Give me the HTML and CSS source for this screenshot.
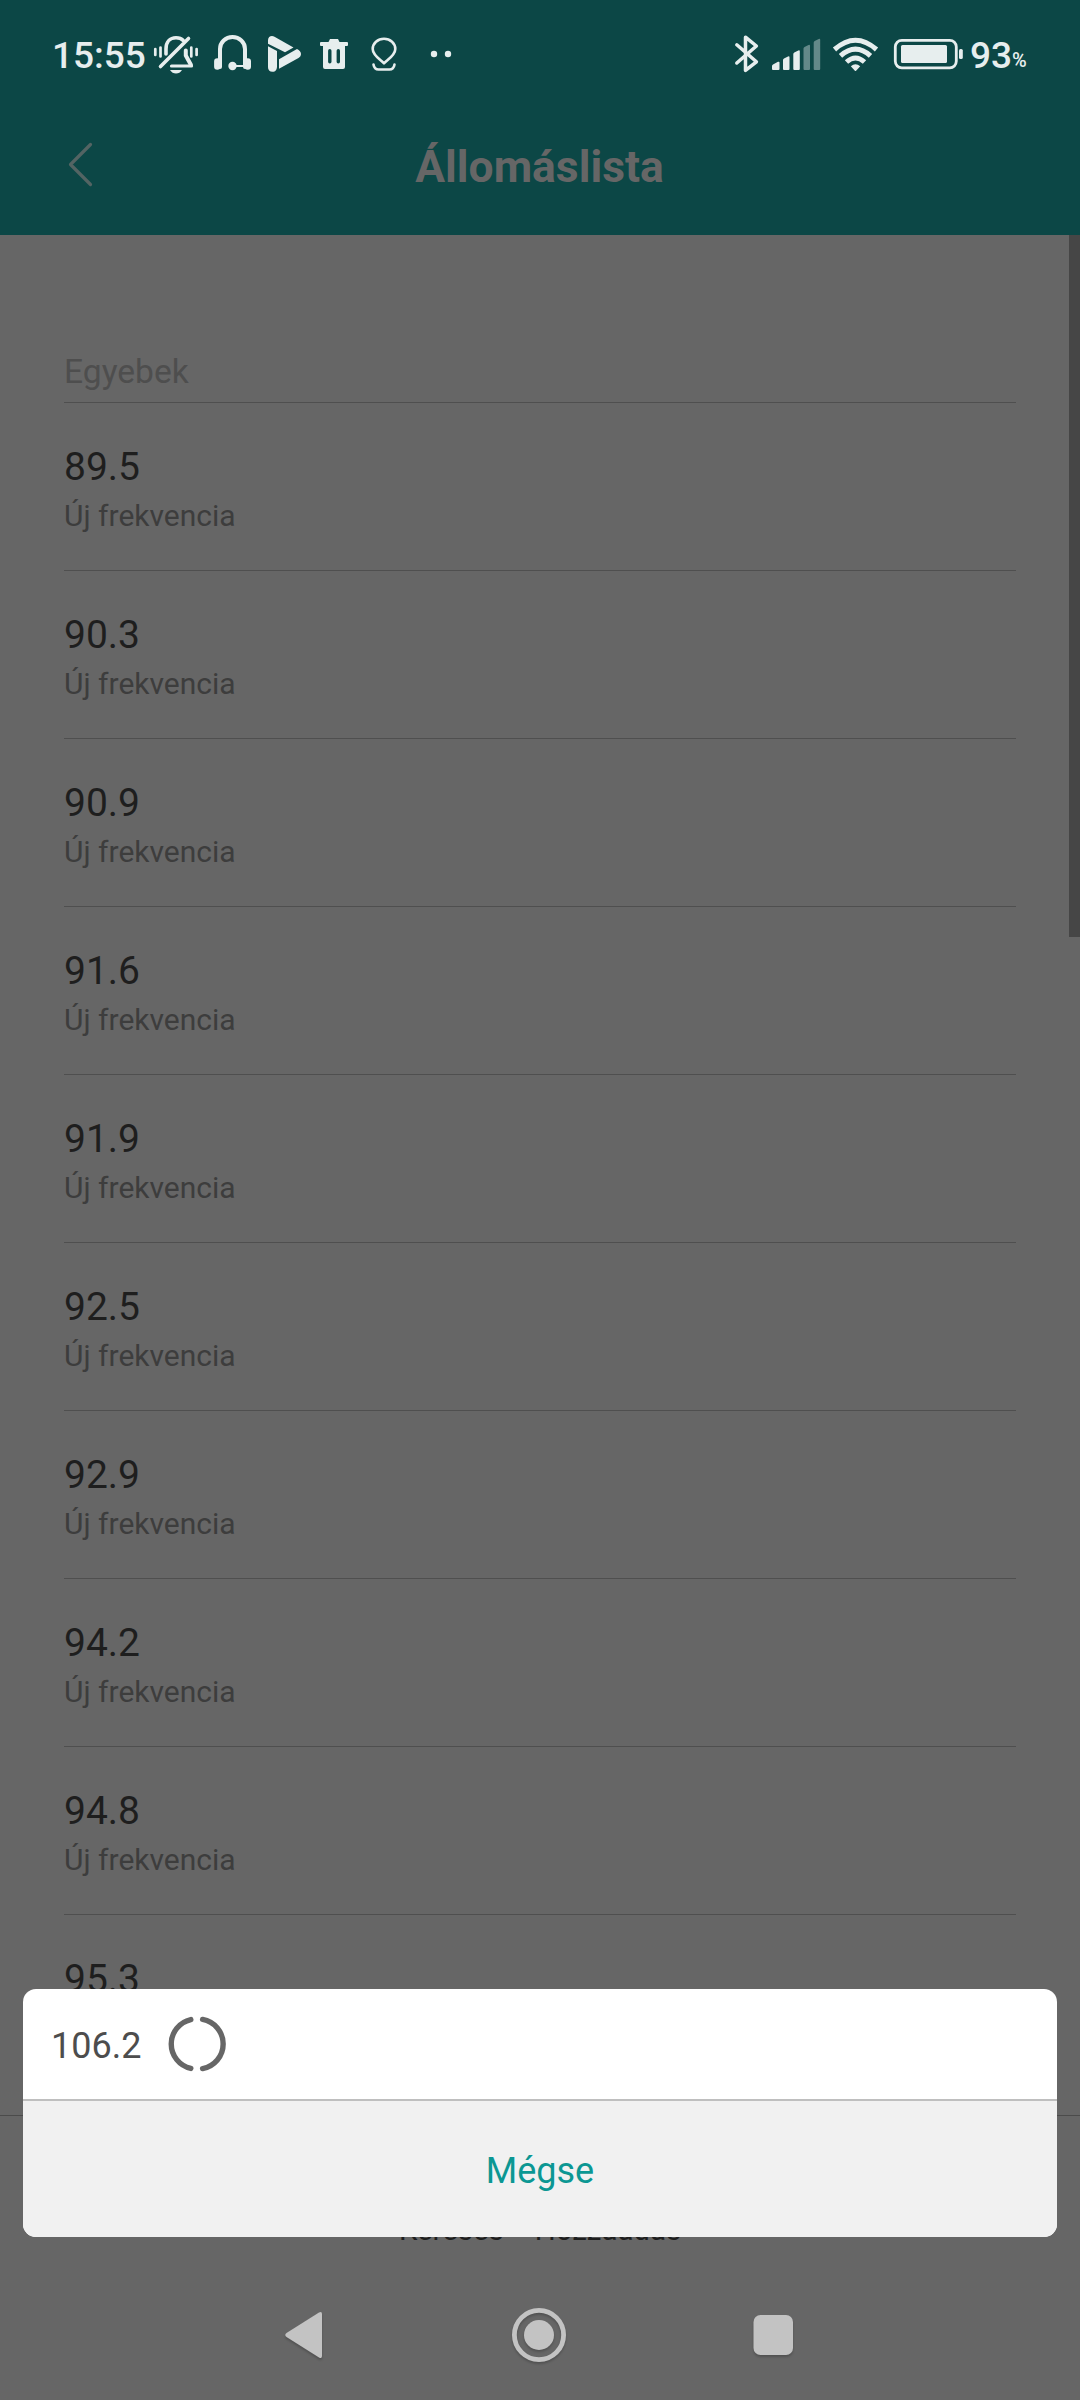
FILE: index.html
```html
<!DOCTYPE html>
<html lang="hu">
<head>
<meta charset="utf-8">
<title>Állomáslista</title>
<link rel="stylesheet" href="styles.css">
</head>
<body>
<div class="screen">
  <header class="top">
    <div class="status">
      <div class="status-group">
        <span class="clock">15:55</span>
        <svg width="56" height="50" viewBox="150 30 56 50" fill="none" stroke="currentColor" stroke-width="3.600" stroke-linecap="round" stroke-linejoin="round">
          <path d="M166 54v-5c0-7 4-11.200 10-11.200 3 0 5.500.8 7 2.500M160.500 66.500L188.500 38.500"/>
          <path d="M185.800 50.500v5l5.200 9.500" stroke-width="4"/>
          <path d="M171.500 66h20" stroke-width="3.200"/>
          <path d="M170 70h12c-1.500 2.500-3.500 3.500-6 3.500s-4.500-1-6-3.500z" fill="currentColor" stroke="none"/>
          <path d="M155.300 49v6M160.500 47.500v9M191.300 47.500v9M196.600 49v6" stroke-width="2.700"/>
        </svg>
        <svg width="54" height="50" viewBox="206 30 54 50" fill="none" stroke="currentColor" stroke-width="4" stroke-linecap="round">
          <path d="M220 67V49a12.500 12 0 0 1 25 0v18"/>
          <path d="M217.300 61.500v5M247.800 61.500v5" stroke-width="6.400"/>
          <path d="M232 66h14" stroke-width="2"/>
          <circle cx="232.500" cy="66" r="4.200" fill="currentColor" stroke="none"/>
        </svg>
        <svg width="50" height="50" viewBox="260 30 50 50" fill="currentColor">
          <path d="M268 46.200l9 4.800v15.500c0 3-1.500 5.300-4.500 5.300s-4.500-2-4.500-4.500z"/>
          <path d="M268 43.800v-3.600c0-3.500 3.500-5.200 6.500-3.400l19 10.800-8.500 4.700z"/>
          <path d="M279 68.800V59.200l18-10.200c2.500 1.200 4 3 4 5s-1.200 3.300-2.500 4z"/>
        </svg>
        <svg width="50" height="50" viewBox="310 30 50 50" fill="currentColor">
          <path fill-rule="evenodd" d="M330 39h8l1.500 3h7.500q1 0 1 1v2q0 1-1 1h-2v21q0 2-2 2h-18q-2 0-2-2V46h-2q-1 0-1-1v-2q0-1 1-1h7.500zM329.800 49q-1.700 0-1.700 1.700v11q0 1.700 1.700 1.700t1.700-1.700v-11q0-1.700-1.700-1.700zM338.300 49q-1.700 0-1.700 1.700v11q0 1.700 1.700 1.700t1.700-1.700v-11q0-1.700-1.700-1.700z"/>
        </svg>
        <svg width="52" height="50" viewBox="360 30 52 50" fill="none" stroke="currentColor" stroke-width="2.600" stroke-linecap="round" stroke-linejoin="round">
          <path d="M384 63.300c-4-4-11.300-8-11.300-14.300a11.300 10.200 0 0 1 22.600 0c0 6.300-7.300 10.300-11.300 14.300zM373.500 64.500c.5 3 2.500 5 5 5h11c2.500 0 4.500-2 5-5"/>
        </svg>
        <svg width="48" height="50" viewBox="412 30 48 50" fill="currentColor">
          <circle cx="434" cy="54" r="3.200"/><circle cx="448" cy="54" r="3.200"/>
        </svg>
      </div>
      <div class="status-group">
        <svg width="35" height="50" viewBox="730 30 35 50" fill="none" stroke="currentColor" stroke-width="3.500" stroke-linecap="round" stroke-linejoin="round">
          <path d="M736.800 44.800l19.600 17-10.900 8.600V37.200l10.900 8.800-19.600 17"/>
        </svg>
        <svg width="63" height="50" viewBox="765 30 63 50" fill="currentColor">
          <path d="M772 69v-3q0-1 1-1.500l5-2.700q1.500-.5 1.500.7V69q0 1-1 1h-5.500q-1 0-1-1zM783 69v-9q0-1 1-1.500l4-2q1.500-.5 1.500.7V69q0 1-1 1h-4.500q-1 0-1-1zM793.300 69V54q0-1 1-1.500l4-2q1.500-.5 1.500.7V69q0 1-1 1h-4.500q-1 0-1-1z"/>
          <path class="weak" d="M803.500 69V48.500q0-1 1-1.500l4-2q1.500-.5 1.500.7V69q0 1-1 1h-4.500q-1 0-1-1zM813.700 69V42.500q0-1 1-1.500l4-2q1.500-.5 1.500.7V69q0 1-1 1h-4.500q-1 0-1-1z"/>
        </svg>
        <svg width="57" height="50" viewBox="828 30 57 50" fill="none" stroke="currentColor" stroke-width="5">
          <path d="M834.500 49.500q21-18.500 42 0M840.500 55.800q15-13.500 30 0M846.500 62q9-8 18 0"/>
          <path d="M850.800 66.300q4.700-4.300 9.400 0l-4.100 4.400q-.6.600-1.200 0z" fill="currentColor" stroke="none"/>
        </svg>
        <svg width="85" height="50" viewBox="885 30 85 50">
          <rect x="895.300" y="40.300" width="61" height="27.500" rx="6.500" fill="none" stroke="currentColor" stroke-width="2.800"/>
          <rect x="901" y="45" width="46" height="18" rx="1.500" fill="currentColor"/>
          <rect x="959" y="49" width="3.800" height="10" rx="1.500" fill="currentColor"/>
        </svg>
        <span class="level">93<small>%</small></span>
      </div>
    </div>
    <div class="titlebar">
      <svg class="back" width="30" height="50" viewBox="66 140 30 50" fill="none" stroke="currentColor" stroke-width="3.200" stroke-linecap="round" stroke-linejoin="round"><path d="M90.500 144.500L70.500 164.500 90.500 184.500"/></svg>
      <h1>Állomáslista</h1>
    </div>
  </header>

  <main class="stations">
    <h2>Egyebek</h2>
    <ul>
      <li><b>89.5</b><span>Új frekvencia</span></li>
      <li><b>90.3</b><span>Új frekvencia</span></li>
      <li><b>90.9</b><span>Új frekvencia</span></li>
      <li><b>91.6</b><span>Új frekvencia</span></li>
      <li><b>91.9</b><span>Új frekvencia</span></li>
      <li><b>92.5</b><span>Új frekvencia</span></li>
      <li><b>92.9</b><span>Új frekvencia</span></li>
      <li><b>94.2</b><span>Új frekvencia</span></li>
      <li><b>94.8</b><span>Új frekvencia</span></li>
      <li><b>95.3</b></li>
    </ul>
    <div class="scrollbar"></div>
  </main>

  <footer class="actions"><span>Keresés</span><span>Hozzáadás</span></footer>

  <nav class="navbar">
    <svg width="540" height="80" viewBox="270 2295 540 80" fill="currentColor">
      <path d="M319 2312.500q3-1.500 3 1.500v42q0 3-3 1.500l-32.500-20.500q-2.500-2 0-4z"/>
      <circle cx="539" cy="2335" r="24.600" fill="none" stroke="currentColor" stroke-width="4.800"/>
      <circle cx="539" cy="2335" r="15"/>
      <rect x="753.500" y="2315" width="39.500" height="40" rx="7"/>
    </svg>
  </nav>

  <section class="dialog">
    <div class="progress">
      <span>106.2</span>
      <svg width="58" height="58" viewBox="-29 -29 58 58" fill="none" stroke="currentColor" stroke-width="5.400" stroke-linecap="round"><path d="M-6.200-24.400A25 25 0 0 0-6.200 24.400M5.600-24.600A25 25 0 0 1 5.600 24.600"/></svg>
    </div>
    <button class="cancel">Mégse</button>
  </section>
</div>
</body>
</html>
```
FILE: styles.css
```css
* { box-sizing: border-box; }
body { margin: 0; background: #666; font-family: Roboto, sans-serif; }
svg { display: block; flex: none; }
h1, h2, ul { margin: 0; padding: 0; }

.screen {
  position: relative;
  display: flex;
  flex-direction: column;
  width: 1080px;
  height: 2400px;
  overflow: hidden;
  background: #666;
}

.top { flex: none; height: 235px; background: #0c4746; }
.status {
  display: flex;
  justify-content: space-between;
  height: 110px;
  padding: 30px 50px 0 52px;
  color: #e7eeee;
}
.status-group { display: flex; height: 50px; line-height: 52px; }
.clock { width: 98px; font-size: 37px; font-weight: 500; white-space: nowrap; }
.level { width: 60px; font-size: 37px; font-weight: 500; white-space: nowrap; }
.level small { position: relative; top: -1px; font-size: 20px; }
.weak { opacity: .4; }

.titlebar { display: flex; align-items: center; height: 110px; padding: 0 66px; color: #666; }
.back { color: #536463; }
h1 { flex: 1; padding: 4px 31px 0 0; text-align: center; font-size: 44.4px; line-height: 52px; font-weight: 700; }

.stations { position: relative; flex: none; height: 1880px; padding: 0 64px; overflow: hidden; }
h2 {
  height: 168px;
  padding-top: 117px;
  border-bottom: 1px solid #4f4f4f;
  color: #4e4e4e;
  font-size: 33.6px;
  line-height: 40px;
  font-weight: 400;
}
ul { list-style: none; }
li { display: flex; flex-direction: column; height: 168px; padding-top: 40px; border-bottom: 1px solid #4f4f4f; }
li b { color: #1e1e1e; font-size: 39px; line-height: 48px; font-weight: 400; }
li span { color: #3d3d3d; font-size: 30px; line-height: 40px; padding-top: 5px; }
.scrollbar { position: absolute; top: 0; right: 0; width: 11px; height: 702px; background: #464646; }

.actions {
  display: flex;
  justify-content: center;
  gap: 31px;
  flex: none;
  height: 155px;
  padding-top: 97px;
  border-top: 1px solid #4b4b4b;
  color: #1e1e1e;
  font-size: 29.4px;
  line-height: 34px;
}
.navbar { display: flex; justify-content: center; padding-top: 25px; color: #c3c3c3; }
.navbar svg { filter: drop-shadow(0 2px 1px rgba(0, 0, 0, .2)); }

.dialog {
  position: absolute;
  left: 23px;
  top: 1989px;
  width: 1034px;
  height: 248px;
  overflow: hidden;
  border-radius: 13px;
  background: #fff;
}
.progress { display: flex; align-items: center; gap: 27px; height: 110px; padding-left: 28px; color: #4d4d4d; font-size: 36px; }
.progress span { padding-top: 3px; }
.progress svg { color: #666; }
.cancel {
  display: block;
  width: 100%;
  height: 138px;
  padding: 4px 0 0;
  border: 0;
  border-top: 2px solid #bfbfbf;
  background: #f1f1f1;
  color: #0c9793;
  font: 36px/42px Roboto, sans-serif;
}
```
